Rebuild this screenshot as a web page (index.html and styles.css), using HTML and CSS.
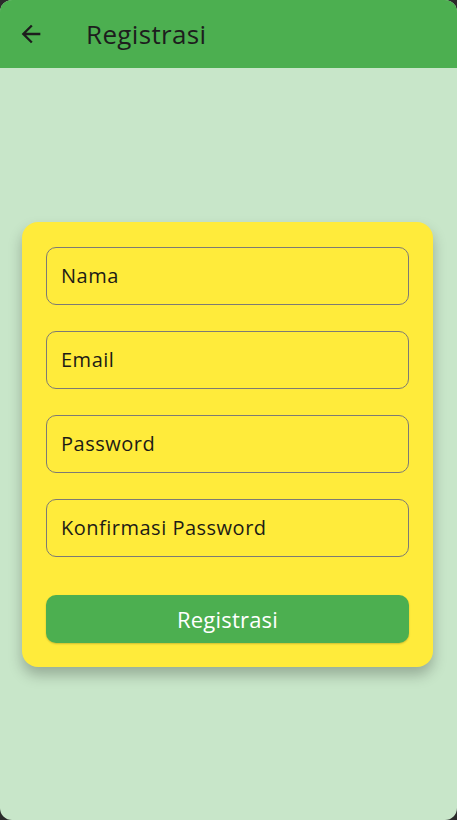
FILE: index.html
```html
<!DOCTYPE html>
<html lang="id">
<head>
<meta charset="utf-8">
<link rel="stylesheet" href="styles.css">
</head>
<body>
<div class="screen">
  <header class="appbar">
    <button class="back" aria-label="Kembali">
      <svg width="28" height="28" viewBox="0 0 24 24"><path d="M20 11H7.83l5.59-5.59L12 4l-8 8 8 8 1.41-1.41L7.83 13H20v-2z" fill="#1d1d1d"/></svg>
    </button>
    <h1 class="title">Registrasi</h1>
  </header>
  <main class="content">
    <form class="card">
      <div class="field">Nama</div>
      <div class="field">Email</div>
      <div class="field">Password</div>
      <div class="field">Konfirmasi Password</div>
      <button type="button" class="submit">Registrasi</button>
    </form>
  </main>
</div>
</body>
</html>
```
FILE: styles.css
```css
* { box-sizing: border-box; }
html, body { margin: 0; padding: 0; }
body {
  background: #2b2b2b;
  width: 457px;
  height: 820px;
  font-family: "Open Sans", "Noto Sans", sans-serif;
}
.screen {
  width: 457px;
  height: 820px;
  border-radius: 12px;
  overflow: hidden;
  background: #C8E6C9;
  display: flex;
  flex-direction: column;
}
.appbar {
  height: 68px;
  background: #4CAF50;
  display: flex;
  align-items: center;
  padding-left: 17px;
  flex-shrink: 0;
}
.back {
  background: none;
  border: 0;
  padding: 0;
  width: 28px;
  height: 28px;
  display: flex;
  margin-top: -1px;
}
.title {
  margin: 0 0 0 41px;
  font-weight: 400;
  font-size: 26px;
  color: #1d1d1d;
  letter-spacing: 0.35px;
}
.content {
  flex: 1;
  display: flex;
  align-items: center;
  padding: 0 24px 0 22px;
}
.card {
  flex: 1;
  background: #FFEB3B;
  border-radius: 16px;
  padding: 25px 24px 24px;
  box-shadow: 0 8px 14px rgba(0,0,0,0.25);
  display: flex;
  flex-direction: column;
  gap: 26px;
  margin: 0;
}
.field {
  height: 58px;
  border: 1px solid #7d7a74;
  border-radius: 10px;
  display: flex;
  align-items: center;
  padding-left: 14px;
  font-size: 20px;
  letter-spacing: 0.5px;
  color: #1d1b16;
}
.submit {
  margin-top: 12px;
  height: 48px;
  border: 0;
  border-radius: 10px;
  background: #4CAF50;
  color: #fff;
  font-family: inherit;
  font-size: 22px;
  letter-spacing: 0.2px;
  box-shadow: 0 1px 2px rgba(0,0,0,0.2);
}
```
